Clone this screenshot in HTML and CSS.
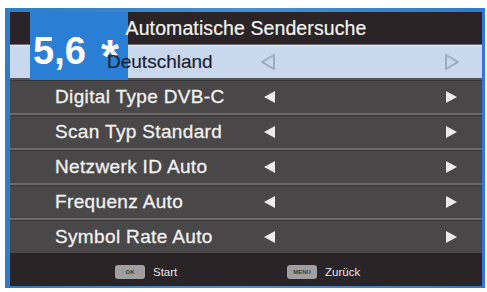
FILE: index.html
```html
<!DOCTYPE html>
<html lang="de">
<head>
<meta charset="utf-8">
<link rel="stylesheet" href="styles.css">
</head>
<body>
<div class="frame">
  <div class="screen">
    <div class="title"><span class="title-text">Automatische Sendersuche</span></div>
    <div class="row row-active">
      <span class="label label-country">Deutschland</span>
      <svg class="arr" viewBox="0 0 16 18" width="16" height="18"><path d="M14 2 L2 9 L14 16 Z" fill="none" stroke="#9eabbf" stroke-width="2" stroke-linejoin="round"/></svg>
      <span></span>
      <svg class="arr" viewBox="0 0 16 18" width="16" height="18"><path d="M2 2 L14 9 L2 16 Z" fill="none" stroke="#9eabbf" stroke-width="2" stroke-linejoin="round"/></svg>
    </div>
    <div class="row">
      <span class="label">Digital Type DVB-C</span>
      <svg class="arr" viewBox="0 0 13 14" width="13" height="14"><path d="M12 1 L1 7 L12 13 Z" fill="#ececec"/></svg>
      <span></span>
      <svg class="arr" viewBox="0 0 13 14" width="13" height="14"><path d="M1 1 L12 7 L1 13 Z" fill="#ececec"/></svg>
    </div>
    <div class="row">
      <span class="label">Scan Typ Standard</span>
      <svg class="arr" viewBox="0 0 13 14" width="13" height="14"><path d="M12 1 L1 7 L12 13 Z" fill="#ececec"/></svg>
      <span></span>
      <svg class="arr" viewBox="0 0 13 14" width="13" height="14"><path d="M1 1 L12 7 L1 13 Z" fill="#ececec"/></svg>
    </div>
    <div class="row">
      <span class="label">Netzwerk ID Auto</span>
      <svg class="arr" viewBox="0 0 13 14" width="13" height="14"><path d="M12 1 L1 7 L12 13 Z" fill="#ececec"/></svg>
      <span></span>
      <svg class="arr" viewBox="0 0 13 14" width="13" height="14"><path d="M1 1 L12 7 L1 13 Z" fill="#ececec"/></svg>
    </div>
    <div class="row">
      <span class="label">Frequenz Auto</span>
      <svg class="arr" viewBox="0 0 13 14" width="13" height="14"><path d="M12 1 L1 7 L12 13 Z" fill="#ececec"/></svg>
      <span></span>
      <svg class="arr" viewBox="0 0 13 14" width="13" height="14"><path d="M1 1 L12 7 L1 13 Z" fill="#ececec"/></svg>
    </div>
    <div class="row row-last">
      <span class="label">Symbol Rate Auto</span>
      <svg class="arr" viewBox="0 0 13 14" width="13" height="14"><path d="M12 1 L1 7 L12 13 Z" fill="#ececec"/></svg>
      <span></span>
      <svg class="arr" viewBox="0 0 13 14" width="13" height="14"><path d="M1 1 L12 7 L1 13 Z" fill="#ececec"/></svg>
    </div>
    <div class="footer">
      <div class="hint"><span class="key">OK</span><span class="hint-text">Start</span></div>
      <div class="hint"><span class="key">MENU</span><span class="hint-text">Zurück</span></div>
    </div>
    <div class="badge"><span class="badge-num">5,6</span><span class="badge-star">*</span></div>
  </div>
</div>
</body>
</html>
```

FILE: styles.css
```css
html, body {
  margin: 0;
  padding: 0;
  background: #ffffff;
}
body {
  font-family: "Liberation Sans", Arial, sans-serif;
}
.frame {
  margin: 8px 2px 2px 5px;
  width: 472px;
  padding: 4px 3px 2px 5px;
  background: linear-gradient(90deg, #2f7bc6, #4a8fd0 50%, #2f7bc6);
}
.screen {
  position: relative;
  width: 472px;
  background: #4a4748;
}
.title {
  height: 33px;
  background: #2a2426;
  color: #f4f4f4;
  font-size: 19.5px;
  line-height: 33px;
  text-align: center;
  letter-spacing: 0.1px;
  box-sizing: border-box;
  border-bottom: 1px solid #6a6a70;
}
.title-text {
  position: relative;
  z-index: 2;
  -webkit-text-stroke: 0.2px #f4f4f4;
}
.row {
  height: 35px;
  box-sizing: border-box;
  display: grid;
  grid-template-columns: 208px 13px 1fr 13px;
  align-items: center;
  padding: 0 24px 0 45px;
  border-top: 1px solid #3a3738;
  border-bottom: 2px solid #6c6a6a;
  background: #4a4748;
}
.row-last {
  border-bottom: none;
  height: 33px;
}
.row-active {
  background: #c9d8ec;
  border-top: 1px solid #e4ecf6;
  border-bottom: 2px solid #555456;
  grid-template-columns: 205px 16px 1fr 16px;
  padding: 0 22px 0 45px;
}
.label {
  position: relative;
  z-index: 2;
  color: #f2f2f2;
  font-size: 19px;
  letter-spacing: 0.35px;
  white-space: nowrap;
  -webkit-text-stroke: 0.3px #f2f2f2;
}
.label-country {
  color: #1c2434;
  padding-left: 52px;
  letter-spacing: 0;
  -webkit-text-stroke: 0.2px #1c2434;
}
.arr {
  display: block;
}
.footer {
  height: 33px;
  background: #2b2426;
  display: grid;
  grid-template-columns: 172px auto;
  align-items: center;
  padding: 5px 0 0 105px;
  box-sizing: border-box;
}
.hint {
  display: flex;
  align-items: center;
  gap: 8px;
}
.key {
  display: inline-block;
  width: 30px;
  height: 14px;
  border-radius: 3px;
  background: #a09e9f;
  color: #3a3a3a;
  font-size: 6px;
  line-height: 14px;
  text-align: center;
  font-weight: bold;
}
.hint-text {
  color: #e6e6e6;
  font-size: 11.5px;
}
.badge {
  position: absolute;
  z-index: 1;
  left: 20px;
  top: 0;
  width: 98px;
  height: 68px;
  background: #2a7ed3;
  color: #ffffff;
  font-weight: bold;
}
.badge-num {
  position: absolute;
  left: 3px;
  top: 20px;
  font-size: 38px;
  line-height: 1;
}
.badge-star {
  position: absolute;
  left: 71px;
  top: 21px;
  font-size: 46px;
  line-height: 1;
}
```
